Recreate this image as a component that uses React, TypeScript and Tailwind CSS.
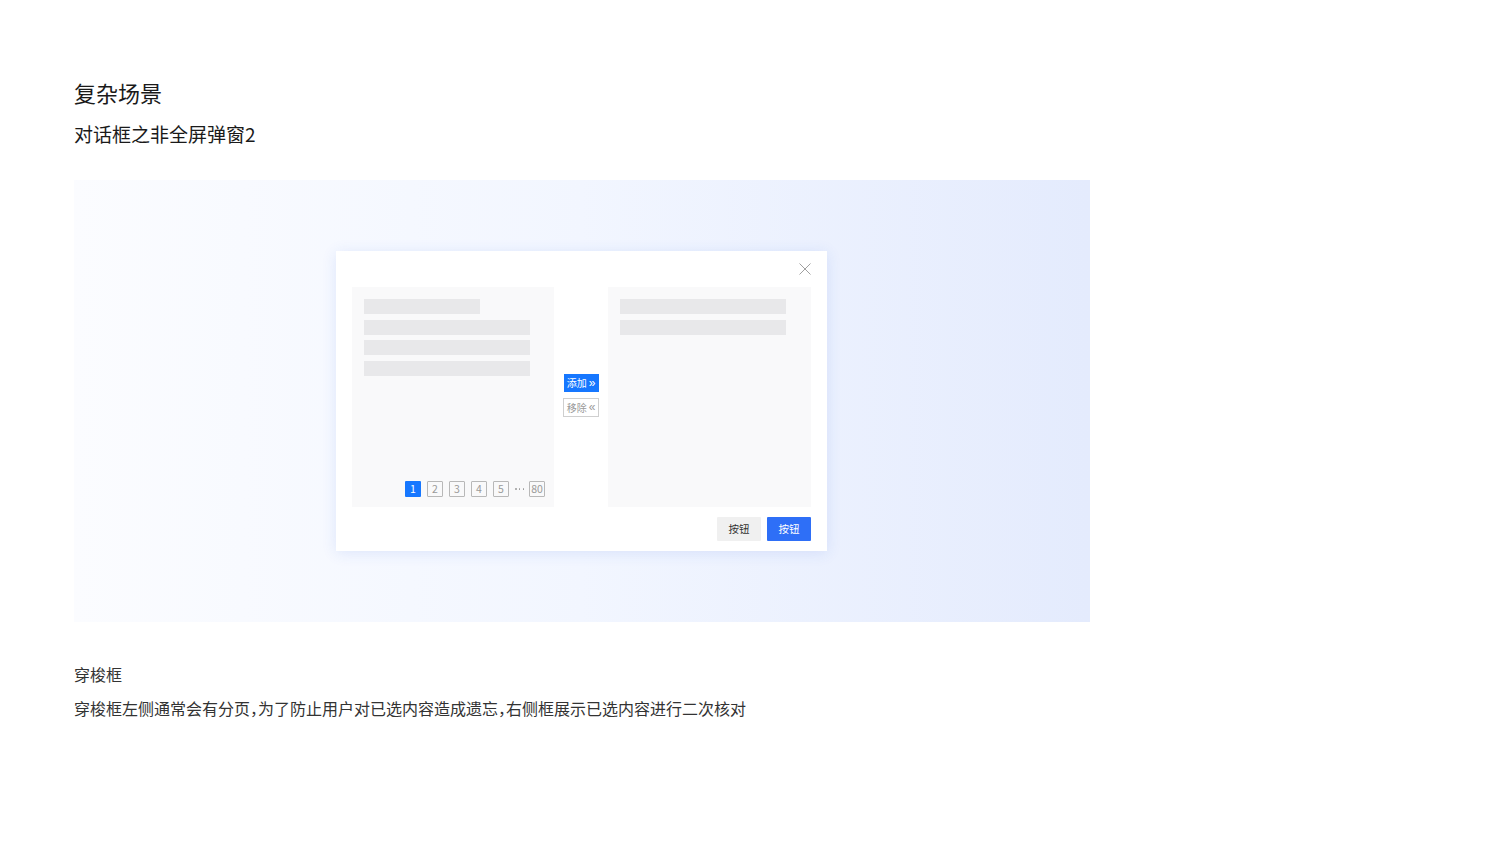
function Bar({ w }: { w: string }) {
  return <div className={`h-[15px] bg-[#e8e8ea] ${w}`}></div>;
}

function PageBox({ n, active }: { n: string; active?: boolean }) {
  return (
    <div
      className={
        active
          ? 'w-4 h-4 flex items-center justify-center text-[10.5px] leading-none bg-[#1677ff] text-white rounded-[1px]'
          : 'w-4 h-4 flex items-center justify-center text-[10.5px] leading-none border border-[#b8b8b8] text-[#999] rounded-[1px]'
      }
    >
      {n}
    </div>
  );
}

function Dialog() {
  return (
    <div className="w-[491px] h-[300px] bg-white shadow-[0_2px_14px_rgba(40,90,220,0.12)] flex flex-col px-4 pb-[9px]">
      <div className="h-9 flex justify-end items-start pt-3">
        <svg width="12" height="12" viewBox="0 0 12 12">
          <path d="M0.5 0.5 L11.5 11.5 M11.5 0.5 L0.5 11.5" stroke="#a0a0a0" strokeWidth="1" fill="none" />
        </svg>
      </div>

      <div className="flex h-[220px]">
        <div className="w-[202px] bg-[#f9f9fa] flex flex-col pt-3 px-3 pb-[10px]">
          <div className="flex flex-col gap-[5.5px]">
            <Bar w="w-[116px]" />
            <Bar w="w-[166px]" />
            <Bar w="w-[166px]" />
            <Bar w="w-[166px]" />
          </div>
          <div className="mt-auto flex justify-end items-center gap-[6px] -mr-[3px]">
            <PageBox n="1" active />
            <PageBox n="2" />
            <PageBox n="3" />
            <PageBox n="4" />
            <PageBox n="5" />
            <div className="w-[9px] flex items-center justify-between -mr-[1px]">
              <span className="w-[1.5px] h-[1.5px] rounded-full bg-[#999]"></span>
              <span className="w-[1.5px] h-[1.5px] rounded-full bg-[#999]"></span>
              <span className="w-[1.5px] h-[1.5px] rounded-full bg-[#999]"></span>
            </div>
            <PageBox n="80" />
          </div>
        </div>

        <div className="w-[54px] flex flex-col items-center justify-center gap-[6px] pb-[3px]">
          <div className="w-[35px] h-[18px] bg-[#1677ff] text-white text-[10px] leading-none flex items-center justify-center gap-[2px]">
            <span>添加</span>
            <span className="font-['Liberation_Sans',sans-serif] text-[12px] leading-none -mt-[1px]">»</span>
          </div>
          <div className="w-[36px] h-[19px] border border-[#cfcfcf] text-[#9a9a9a] text-[10px] leading-none flex items-center justify-center gap-[2px]">
            <span>移除</span>
            <span className="font-['Liberation_Sans',sans-serif] text-[12px] leading-none -mt-[1px]">«</span>
          </div>
        </div>

        <div className="w-[203px] bg-[#f9f9fa] flex flex-col pt-3 px-3 gap-[5.5px]">
          <Bar w="w-[166px]" />
          <Bar w="w-[166px]" />
        </div>
      </div>

      <div className="flex justify-end gap-[6px] mt-[10px]">
        <div className="w-11 h-6 bg-[#f0f0f0] text-[#333] text-[10.5px] flex items-center justify-center rounded-[1px]">
          按钮
        </div>
        <div className="w-11 h-6 bg-[#2e6ff7] text-white text-[10.5px] flex items-center justify-center rounded-[1px]">
          按钮
        </div>
      </div>
    </div>
  );
}

export default function App() {
  return (
    <div className="w-[1500px] h-[843px] bg-white pl-[74px] pt-[77px] font-['Noto_Sans_CJK_SC','Noto_Sans',sans-serif]">
      <h1 className="text-[22px] leading-[30px] text-[#1a1a1a] font-normal">复杂场景</h1>
      <h2 className="mt-[13px] text-[19px] leading-[28px] text-[#1a1a1a] font-normal">对话框之非全屏弹窗2</h2>

      <div className="mt-[32px] w-[1016px] h-[442px] bg-gradient-to-r from-[#fbfcff] via-[#f2f6ff] to-[#e4ebfd] flex items-center justify-center">
        <div className="-ml-[1px]">
          <Dialog />
        </div>
      </div>

      <p className="mt-[40px] text-[16px] leading-[24px] text-[#333]">穿梭框</p>
      <p className="mt-[10px] text-[16px] leading-[24px] text-[#333] [font-feature-settings:'halt']">
        穿梭框左侧通常会有分页，为了防止用户对已选内容造成遗忘，右侧框展示已选内容进行二次核对
      </p>
    </div>
  );
}
